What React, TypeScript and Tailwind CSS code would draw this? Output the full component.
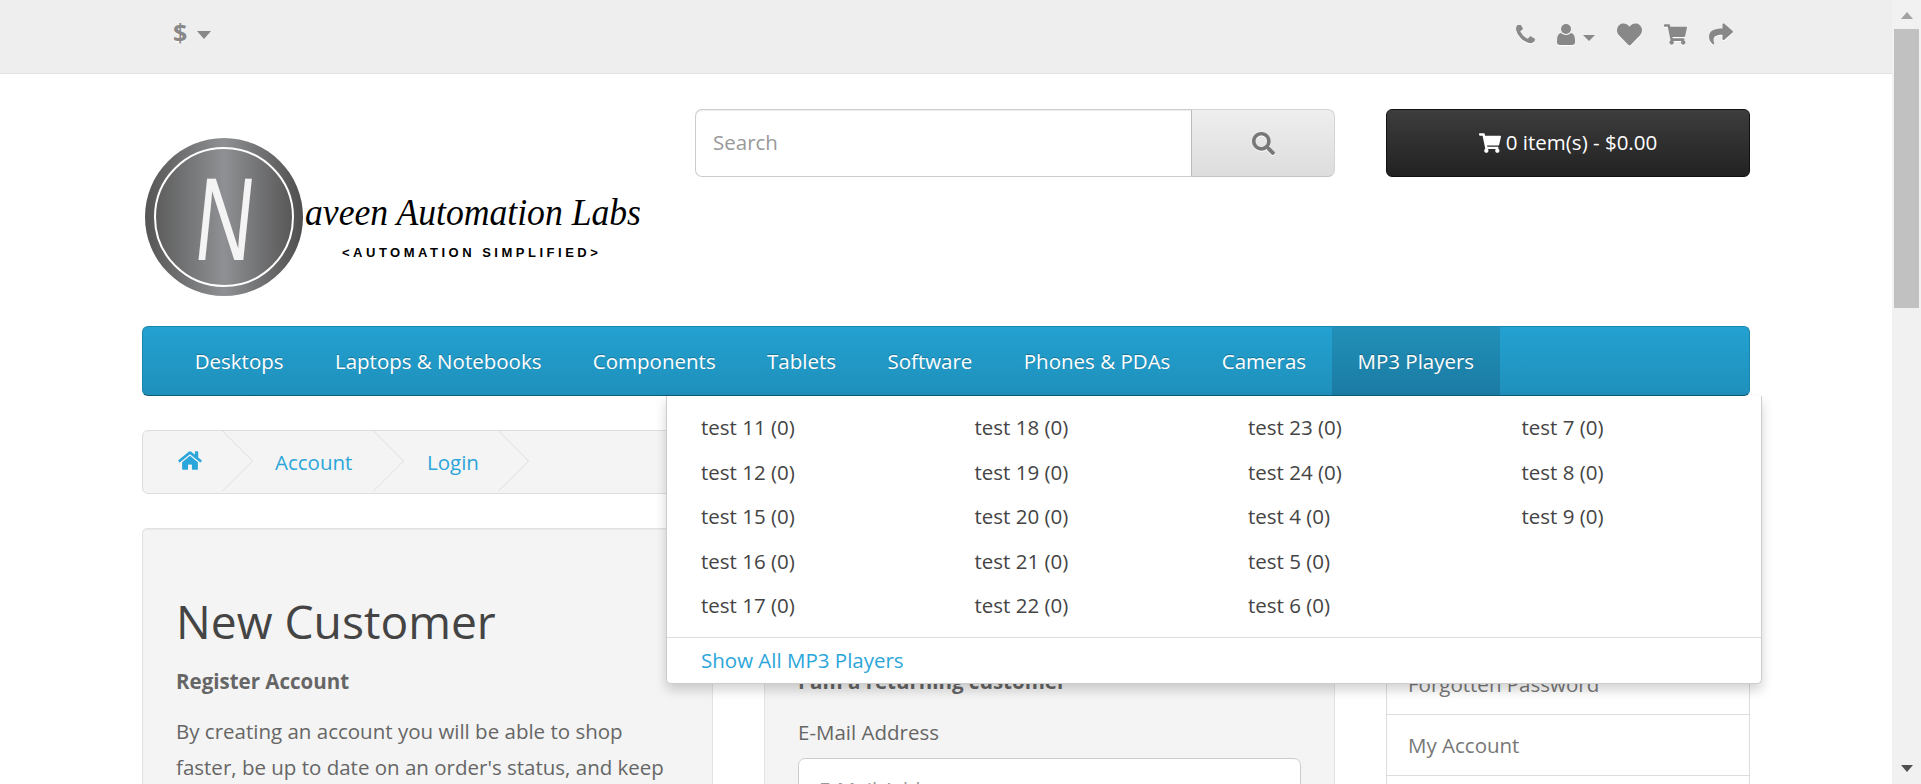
import { FaHeart, FaShoppingCart, FaShare, FaHome, FaSearch } from "react-icons/fa";

const navItems = ["Desktops", "Laptops & Notebooks", "Components", "Tablets", "Software", "Phones & PDAs", "Cameras"];
const columns = [
  ["test 11 (0)", "test 12 (0)", "test 15 (0)", "test 16 (0)", "test 17 (0)"],
  ["test 18 (0)", "test 19 (0)", "test 20 (0)", "test 21 (0)", "test 22 (0)"],
  ["test 23 (0)", "test 24 (0)", "test 4 (0)", "test 5 (0)", "test 6 (0)"],
  ["test 7 (0)", "test 8 (0)", "test 9 (0)"],
];

function Phone() {
  return (
    <svg viewBox="192 192 1408 1408" className="w-[19px] h-[19px] fill-[#888] drop-shadow-[0_1px_0_#fff]">
      <path d="M1600 1240q0 27-10 70.5t-21 68.5q-21 50-122 106-94 51-186 51-27 0-53-3.5t-57.5-12.5-47-14.5-55.5-20.5-49-18q-98-35-175-83-127-79-264-216t-216-264q-48-77-83-175-3-9-18-49t-20.5-55.5-14.5-47-12.5-57.5-3.5-53q0-92 51-186 56-101 106-122 25-11 68.5-21t70.5-10q14 0 21 3 18 6 53 76 11 19 30 54t35 63.5 31 53.5q3 4 17.5 25t21.5 35.5 7 28.5q0 20-28.5 50t-62 55-62 53-28.5 46q0 9 5 22.5t8.5 20.5 14 24 11.5 19q76 137 174 235t235 174q2 1 19 11.5t24 14 20.5 8.5 22.5 5q18 0 46-28.5t53-62 55-62 50-28.5q14 0 28.5 7t35.5 21.5 25 17.5q25 15 53.5 31t63.5 35 54 30q70 35 76 53 3 7 3 21z" />
    </svg>
  );
}

function User() {
  return (
    <svg viewBox="0 0 18 21" className="w-[18px] h-[21px] fill-[#888] drop-shadow-[0_1px_0_#fff]">
      <circle cx="9" cy="5" r="5" />
      <path d="M0 16q0-6 4-7 2 2 5 2t5-2q4 1 4 7v2q0 3-3 3H3q-3 0-3-3z" />
    </svg>
  );
}

function Caret({ className }: { className: string }) {
  return <span className={`block w-0 h-0 border-l-transparent border-r-transparent ${className}`} />;
}

function Logo() {
  return (
    <svg viewBox="0 0 500 162" className="w-[500px] h-[162px] block">
      <defs>
        <linearGradient id="metal" x1="0" x2="1" y1="0" y2="0">
          <stop offset="0" stopColor="#555" />
          <stop offset="0.5" stopColor="#8f9093" />
          <stop offset="1" stopColor="#4f4f4f" />
        </linearGradient>
      </defs>
      <circle cx="79" cy="80" r="79" fill="url(#metal)" />
      <circle cx="79" cy="80" r="69" fill="none" stroke="#fff" strokeWidth="2" />
      <text x="0" y="0" textAnchor="middle" fill="#f4f4f4" fontFamily="'Liberation Sans', sans-serif" fontSize="100" transform="translate(76 123) skewX(-6) scale(0.8 1.18)">N</text>
      <text x="160" y="88" fill="#000" fontFamily="'Liberation Serif', serif" fontStyle="italic" fontSize="38" textLength="336" lengthAdjust="spacingAndGlyphs">aveen Automation Labs</text>
      <text x="197" y="120" fill="#000" fontFamily="'Liberation Sans', sans-serif" fontWeight="700" fontSize="13" letterSpacing="2.2" textLength="258">{"<AUTOMATION SIMPLIFIED>"}</text>
    </svg>
  );
}

function Chevron() {
  return (
    <svg viewBox="0 0 32 64" className="absolute top-0 right-0 w-[32px] h-[62px]" fill="none" stroke="#ddd">
      <path d="M0 0 L31 31 L0 62" />
    </svg>
  );
}

export default function App() {
  return (
    <div className="w-[1921px] h-[784px] overflow-hidden flex bg-white text-[#666] text-[20.5px] [font-family:'Open_Sans',sans-serif]">
      <main className="w-[1892px] h-[784px] overflow-hidden">
        <div className="h-[74px] bg-[#eee] border-b border-[#e2e2e2]">
          <div className="w-[1608px] mx-auto flex justify-between">
            <div className="flex items-center pl-[31px] h-[68px] gap-[10px]">
              <span className="text-[25px] font-bold text-[#888] -mt-[2px] [text-shadow:0_1px_0_#fff]">$</span>
              <Caret className="mt-[2px] border-l-[7.5px] border-r-[7.5px] border-t-[8px] border-t-[#888]" />
            </div>
            <div className="flex items-center h-[68px] pr-[17px]">
              <Phone />
              <span className="ml-[22px]"><User /></span>
              <Caret className="ml-[8px] mt-[8px] border-l-[6px] border-r-[6px] border-t-[6px] border-t-[#888]" />
              <FaHeart className="ml-[22px] w-[25px] h-[25px] text-[#888] drop-shadow-[0_1px_0_#fff]" />
              <FaShoppingCart className="ml-[22px] w-[23px] h-[21px] text-[#888] drop-shadow-[0_1px_0_#fff]" />
              <FaShare className="ml-[22px] w-[24px] h-[24px] text-[#888] drop-shadow-[0_1px_0_#fff]" />
            </div>
          </div>
        </div>

        <div className="w-[1608px] mx-auto">
          <div className="flex items-start pt-[35px]">
            <div className="w-[553px] pt-[28px] pl-[3px]">
              <Logo />
            </div>
            <div className="w-[640px] h-[68px] flex">
              <div className="flex-1 bg-white border border-[#ccc] border-r-[#bbb] rounded-l-[7px] shadow-[inset_0_1px_1px_rgba(0,0,0,0.075)] flex items-center pl-[17px] pb-[1px] text-[#999]">Search</div>
              <div className="w-[143px] border border-[#d4d4d4] border-b-[#c4c4c4] border-l-0 rounded-r-[7px] bg-gradient-to-b from-[#eee] to-[#ddd] flex items-center justify-center">
                <FaSearch className="w-[23px] h-[23px] text-[#777] drop-shadow-[0_1px_0_#fff]" />
              </div>
            </div>
            <div className="ml-[51px] w-[364px] h-[68px] rounded-[6px] border border-[#111] bg-gradient-to-b from-[#3d3d3d] to-[#222] flex items-center justify-center gap-[5px] pb-[1px] text-white">
              <FaShoppingCart className="w-[22px] h-[20px]" />
              <span>0 item(s) - $0.00</span>
            </div>
          </div>

          <nav className="relative mt-[27px] h-[70px] rounded-[6px] border border-[#1b86ad] border-b-[#0f5a78] bg-gradient-to-b from-[#23a1d1] to-[#1f90bb] flex pl-[26px] text-white">
            {navItems.map((n) => (
              <div key={n} className="px-[25.7px] flex items-center h-full [text-shadow:0_-1px_0_rgba(0,0,0,0.25)]">{n}</div>
            ))}
            <div className="px-[25.7px] flex items-center h-full bg-gradient-to-b from-[#2190b8] to-[#1b7ba3] [text-shadow:0_-1px_0_rgba(0,0,0,0.25)]">MP3 Players</div>

            <div className="absolute z-10 top-[69px] left-[523px] w-[1096px] h-[288px] bg-white border border-[#ccc] border-t-0 rounded-b-[5px] shadow-[0_6px_12px_rgba(0,0,0,0.175)] text-[#444] [text-shadow:none] flex flex-col">
              <div className="h-[241px] flex pl-[34px] pt-[9px]">
                {columns.map((col, i) => (
                  <div key={i} className="w-[273.5px] shrink-0 flex flex-col">
                    {col.map((t) => (
                      <div key={t} className="h-[44.6px] flex items-center">{t}</div>
                    ))}
                  </div>
                ))}
              </div>
              <div className="flex-1 border-t border-[#ddd] pl-[34px] flex items-center text-[#2ba6da]">Show All MP3 Players</div>
            </div>
          </nav>

          <div className="mt-[34px] h-[64px] rounded-[6px] border border-[#ddd] bg-[#f4f4f4] flex text-[#2ba6da]">
            <div className="relative w-[111px] flex items-center pl-[35px]">
              <FaHome className="w-[24px] h-[21px] -mt-[4px]" />
              <Chevron />
            </div>
            <div className="relative w-[151px] flex items-center pl-[21px]">Account<Chevron /></div>
            <div className="relative w-[125px] flex items-center pl-[22px]">Login<Chevron /></div>
          </div>

          <div className="mt-[34px] flex">
            <div className="w-[571px] h-[300px] bg-[#f4f4f4] border border-[#e3e3e3] rounded-[5px] shadow-[inset_0_1px_1px_rgba(0,0,0,0.05)] pl-[33px] pr-[30px]">
              <h2 className="text-[46.2px] leading-[50px] text-[#444] mt-[68px]">New Customer</h2>
              <p className="font-bold leading-[25px] mt-[22px]">Register Account</p>
              <p className="leading-[35.6px] mt-[20px]">By creating an account you will be able to shop faster, be up to date on an order's status, and keep</p>
            </div>
            <div className="ml-[51px] w-[571px] h-[300px] bg-[#f4f4f4] border border-[#e3e3e3] rounded-[5px] pl-[33px] pr-[33px]">
              <p className="font-bold leading-[25px] mt-[140px]">I am a returning customer</p>
              <p className="leading-[25px] mt-[26px]">E-Mail Address</p>
              <div className="mt-[13px] h-[68px] bg-white border border-[#ccc] rounded-[7px] pl-[20px] pt-[15px] text-[#999]">E-Mail Address</div>
            </div>
            <div className="ml-[51px] w-[364px] flex flex-col text-[#777]">
              <div className="h-[186px] border border-[#ddd] border-b-0 flex items-end pl-[21px] pb-[14px]">Forgotten Password</div>
              <div className="h-[62px] border border-[#ddd] flex items-center pl-[21px]">My Account</div>
              <div className="h-[62px] border-x border-[#ddd]" />
            </div>
          </div>
        </div>
      </main>

      <aside className="w-[29px] h-[784px] bg-[#f1f1f1] flex flex-col items-center">
        <Caret className="mt-[12px] border-l-[6px] border-r-[6px] border-b-[7px] border-b-[#a3a3a3]" />
        <div className="mt-[10px] w-[25px] h-[279px] bg-[#c1c1c1]" />
        <div className="flex-1" />
        <Caret className="mb-[12px] border-l-[6px] border-r-[6px] border-t-[7px] border-t-[#505050]" />
      </aside>
    </div>
  );
}
